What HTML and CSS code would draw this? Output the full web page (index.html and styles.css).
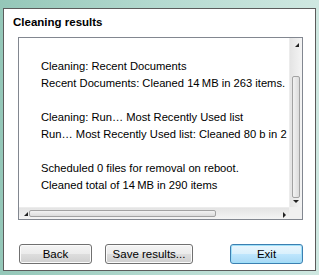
FILE: index.html
```html
<!DOCTYPE html>
<html lang="en">
<head>
    <meta charset="UTF-8">
    <meta name="viewport" content="width=device-width, initial-scale=1.0">
    <title>Cleaning results</title>
    <link rel="stylesheet" href="styles.css">
</head>
<body>
    <div class="dialog">
        <h2 class="title">Cleaning results</h2>
        <div class="log-box">
            <div class="log-text">
                <p>Cleaning: Recent Documents</p>
                <p>Recent Documents: Cleaned 14&#8239;MB in 263 items.</p>
                <p class="gap">Cleaning: Run&hellip; Most Recently Used list</p>
                <p>Run&hellip; Most Recently Used list: Cleaned 80 b in 2 ite</p>
                <p class="gap">Scheduled 0 files for removal on reboot.</p>
                <p>Cleaned total of 14&#8239;MB in 290 items</p>
            </div>
            <div class="vscroll">
                <span class="arrow-up"></span>
                <span class="vthumb"></span>
                <span class="arrow-down"></span>
            </div>
            <div class="hscroll">
                <span class="arrow-left"></span>
                <span class="hthumb"></span>
                <span class="arrow-right"></span>
            </div>
            <div class="corner"></div>
        </div>
        <div class="buttons">
            <button class="btn">Back</button>
            <button class="btn btn-save">Save results...</button>
            <button class="btn btn-default">Exit</button>
        </div>
    </div>
</body>
</html>
```

FILE: styles.css
```css
body {
    margin: 0;
    width: 319px;
    height: 275px;
    overflow: hidden;
    background: linear-gradient(90deg, #94c7b8 0%, #b4dad0 50%, #cfe8e1 100%);
    font-family: "Liberation Sans", Arial, sans-serif;
    font-size: 11px;
    color: #000;
}
.dialog {
    box-sizing: border-box;
    margin: 8px 3px 0 3px;
    width: 313px;
    height: 263px;
    background-color: #fff;
    border: 1px solid #5c5c5c;
    padding: 0 0 0 14px;
}
.title {
    margin: 6px 0 0 -5px;
    font-size: 11.5px;
    font-weight: bold;
    line-height: 15px;
    height: 22px;
}
.log-box {
    box-sizing: border-box;
    width: 285px;
    height: 183px;
    border: 1px solid #828790;
    display: grid;
    grid-template-columns: 1fr 13px;
    grid-template-rows: 1fr 12px;
    overflow: hidden;
}
.log-text {
    padding: 20px 0 0 22px;
    white-space: nowrap;
    overflow: hidden;
    line-height: 17px;
    font-size: 11.2px;
}
.log-text p {
    margin: 0;
}
.log-text .gap {
    margin-top: 17px;
}
.vscroll {
    position: relative;
    background: linear-gradient(90deg, #e4e4e4, #f4f4f4);
    border-left: 1px solid #ececec;
}
.vthumb {
    position: absolute;
    left: 2px;
    right: 2px;
    top: 38px;
    height: 120px;
    border: 1px solid #a2a2a2;
    border-radius: 2px;
    background: linear-gradient(90deg, #f2f2f2, #dcdcdc);
}
.arrow-up,
.arrow-down {
    position: absolute;
    right: 3px;
    width: 0;
    height: 0;
}
.arrow-up {
    top: 5px;
    border-left: 4px solid transparent;
    border-bottom: 4px solid #222;
}
.arrow-down {
    bottom: 4px;
    border-left: 3px solid transparent;
    border-right: 3px solid transparent;
    border-top: 3px solid #222;
}
.hscroll {
    position: relative;
    background: linear-gradient(180deg, #e4e4e4, #f4f4f4);
    border-top: 1px solid #ececec;
}
.hthumb {
    position: absolute;
    top: 2px;
    bottom: 2px;
    left: 10px;
    width: 185px;
    border: 1px solid #a2a2a2;
    border-radius: 2px;
    background: linear-gradient(180deg, #f2f2f2, #dcdcdc);
}
.arrow-left,
.arrow-right {
    position: absolute;
    top: 4px;
    width: 0;
    height: 0;
}
.arrow-left {
    left: 5px;
    border-top: 4px solid transparent;
    border-right: 4px solid #222;
}
.arrow-right {
    right: 3px;
    border-top: 3px solid transparent;
    border-bottom: 3px solid transparent;
    border-left: 3px solid #222;
}
.corner {
    background-color: #f0f0f0;
}
.buttons {
    display: flex;
    margin-top: 24px;
    margin-left: 1px;
}
.btn {
    box-sizing: border-box;
    width: 73px;
    height: 20px;
    padding: 0;
    border: 1px solid #707070;
    border-radius: 3px;
    background: linear-gradient(180deg, #f4f4f4 0%, #ebebeb 50%, #dddddd 51%, #cfcfcf 100%);
    font-family: "Liberation Sans", Arial, sans-serif;
    font-size: 11.5px;
    color: #000;
    box-shadow: inset 0 0 0 1px #fbfbfb;
}
.btn-save {
    width: 88px;
    margin-left: 13px;
}
.btn-default {
    margin-left: 37px;
    border-color: #3c7fb1;
    background: linear-gradient(180deg, #eaf6fd 0%, #d9f0fc 50%, #bee6fd 51%, #a7d9f5 100%);
    box-shadow: inset 0 0 0 1px #9fe0f9;
}
```
